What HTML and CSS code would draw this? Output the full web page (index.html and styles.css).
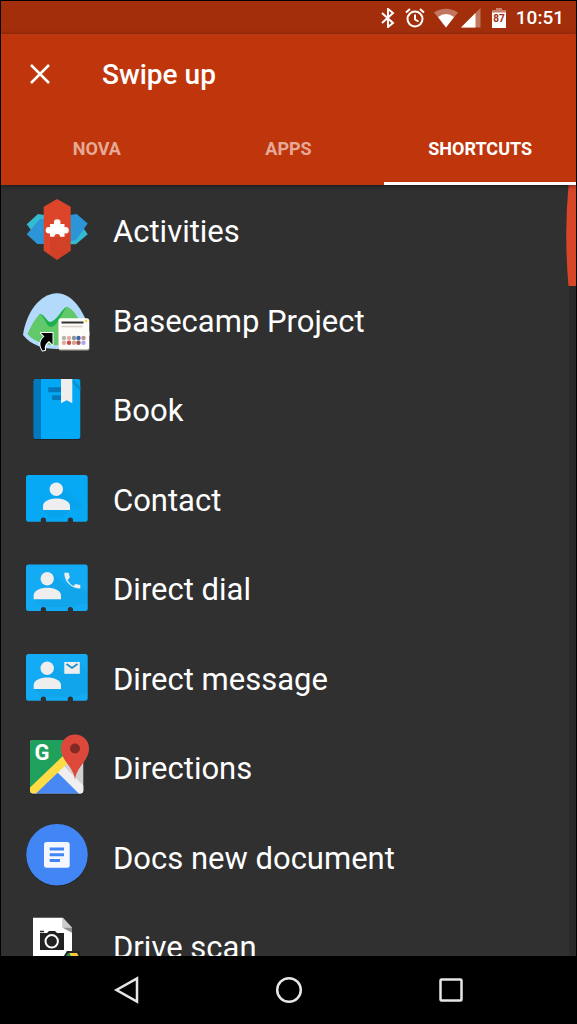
FILE: index.html
```html
<!DOCTYPE html>
<html lang="en">
<head>
  <meta charset="UTF-8">
  <meta name="viewport" content="width=device-width, initial-scale=1">
  <title>Swipe up</title>
  <link rel="stylesheet" href="styles.css">
</head>
<body>

  <div class="status-bar">
    <svg width="14" height="20" viewBox="0 0 14 20" fill="none" stroke="#fff" stroke-width="2"><path d="M1 5l11 10-5 4V1l5 4L1 15"/></svg>
    <svg class="alarm" width="20" height="20" viewBox="0 0 20 20" fill="none" stroke="#fff" stroke-width="2"><circle cx="10" cy="11" r="7.5"/><path d="M10 6.500v5l3.500 2M1 4.500l4-3.500M19 4.500L15 1"/></svg>
    <svg class="wifi" width="24" height="20" viewBox="0 0 24 20"><path d="M0 4.500Q12-3 24 4.500L12 19.500z" fill="#fff" opacity=".35"/><path d="M4 9Q12 3 20 9l-8 10.500z" fill="#fff"/></svg>
    <svg class="signal" width="20" height="20" viewBox="0 0 20 20"><path d="M0 19.500L19.500 0v19.500z" fill="#fff" opacity=".35"/><path d="M0 19.500L14.500 5v14.500z" fill="#fff"/></svg>
    <svg class="battery" width="14" height="20" viewBox="0 0 14 20"><path d="M4 0h6v2h4v3H0V2h4z" fill="#fff" opacity=".4"/><path d="M0 4.500h14V20H0z" fill="#fff"/><text x="7" y="14" text-anchor="middle" class="battery-text">87</text></svg>
    <span class="clock">10:51</span>
  </div>

  <header class="app-bar">
    <div class="title-row">
      <button class="close-btn" aria-label="Close">
        <svg width="20" height="20" viewBox="0 0 20 20" fill="none" stroke="#fff" stroke-width="2.500"><path d="M1 1l18 18M19 1L1 19"/></svg>
      </button>
      <h1>Swipe up</h1>
    </div>
    <nav class="tabs">
      <button class="tab">NOVA</button>
      <button class="tab">APPS</button>
      <button class="tab active">SHORTCUTS</button>
    </nav>
  </header>

  <main class="list-wrap">
    <div class="list">
      <button class="row">
        <svg class="icon" viewBox="0 0 70 70">
          <path d="M22 20l-6-1L4.700 29.300 9 35l13 8zM48 49.300h6l11.700-10L62 34l-14 4z" fill="#33bcd0"/>
          <path d="M22 24h-4L4.700 39.300 15.300 49H22zM48 20l6.700-1 11 9.500L54 45l-6 1z" fill="#2b95d8"/>
          <path d="M35 4l13.700 7.700v44L35 65l-13.300-9.300v-44z" fill="#dc452a"/>
          <path d="M43 42l5.700-5v18.700L35 65l-7-5V42z" fill="#b93721" opacity=".3"/>
          <path d="M28 29h14.500v12.700h-4.500a2.800 2.800 0 0 0-5.600 0H28z" fill="#fff"/>
          <circle cx="35.200" cy="27.500" r="3.300" fill="#fff"/><circle cx="27" cy="35.200" r="3.300" fill="#fff"/><circle cx="43.500" cy="35.200" r="3.300" fill="#fff"/>
        </svg>
        <span>Activities</span>
      </button>
      <button class="row">
        <svg class="icon" viewBox="0 0 70 70">
          <path d="M35 8.300C52 8.300 65 31 68 50 60 60 49 64 35 64S9 60 1 50C4 28 18 8.300 35 8.300z" fill="#b4dafb"/>
          <path d="M5.500 49C9 41 13 34 17.300 29.300 22 28 25 37 28 37c6 0 11-12 16.700-15.300C50 22 59 35 64 49 50 64 18 64 5.500 49z" fill="#61c96a"/>
          <path d="M17.300 29.300C22 28 25 37 28 37c6 0 11-12 16.700-15.300C39 29 36 41 29 42c-5 0-6-11-11.700-12.700z" fill="#1db04e"/>
          <path d="M19 48h11.500v11.500L27 56c-3.500 2.500-4.500 5-4 9l-2.500.500c-3.500-6-2.500-10.500 2-14z" fill="#000" stroke="#fff" stroke-width="2" stroke-linejoin="round" paint-order="stroke"/>
          <rect x="36.500" y="34" width="31" height="31.500" rx="2" fill="#aaa7a0"/>
          <rect x="36.500" y="33.300" width="30.500" height="31" rx="2" fill="#fdfcf9"/>
          <path d="M39.500 37.500h22" stroke="#333" stroke-width="2"/><path d="M39.500 41.500h21" stroke="#d8d2c6" stroke-width="1.500"/>
          <circle cx="64" cy="36" r="1.300" fill="#f5d53d"/>
          <g fill="#b9b5ae"><circle cx="42" cy="53" r="2.200"/><circle cx="47" cy="53" r="2.200" fill="#e5aaa5"/><circle cx="52" cy="53" r="2.200" fill="#8a9598"/><circle cx="56.500" cy="53" r="2.200" fill="#3a64a5"/><circle cx="61.500" cy="53" r="2.200" fill="#bb9199"/><circle cx="42" cy="57.700" r="2.200" fill="#dfaaa0"/><circle cx="47" cy="57.700" r="2.200" fill="#c64b43"/><circle cx="52" cy="57.700" r="2.200" fill="#e09b8b"/><circle cx="56.500" cy="57.700" r="2.200" fill="#965656"/><circle cx="61.500" cy="57.700" r="2.200" fill="#aaa9ed"/></g>
        </svg>
        <span>Basecamp Project</span>
      </button>
      <button class="row">
        <svg class="icon" viewBox="0 0 70 70">
          <rect x="11.700" y="6" width="46.600" height="60" rx="2.500" fill="#222"/>
          <rect x="11.700" y="5" width="46.600" height="60" rx="2.500" fill="#03a9f4"/>
          <path d="M14 5h5v60h-5q-2.300 0-2.300-2.500v-55Q11.700 5 14 5z" fill="#0478bd"/>
          <path d="M50.300 5l8 8v4L50.300 9z" fill="#0293d5"/>
          <path d="M26.300 13.300H39v5H26.300zM30 21.300h9V26h-9z" fill="#0478bd"/>
          <path d="M39 5h11.300v24.300l-5.600-3-5.700 3z" fill="#eee"/>
        </svg>
        <span>Book</span>
      </button>
      <button class="row">
        <svg class="icon" viewBox="0 0 70 70">
          <path d="M6.500 11h56.700q2.500 0 2.500 2.500v41.700q0 2.500-2.500 2.500H51V56a2.600 2.600 0 0 0-5.200 0v1.700H24V56a2.600 2.600 0 0 0-5.200 0v1.700H6.500Q4 57.700 4 55.200V13.500Q4 11 6.500 11z" fill="#08a9f4"/>
          <path d="M39 20l22 22-13 4-8 8H29l-8-8z" fill="#0684c4" opacity=".15"/>
          <circle cx="34.300" cy="25.300" r="6.700" fill="#eee"/><path d="M21 46v-4c0-5 7-7.500 13.500-7.500S48 37 48 42v4z" fill="#eee"/>
        </svg>
        <span>Contact</span>
      </button>
      <button class="row">
        <svg class="icon" viewBox="0 0 70 70">
          <path d="M6.500 11.500h56.700q2.500 0 2.500 2.500v41.500q0 2.500-2.500 2.500H51v-1.500a2.600 2.600 0 0 0-5.200 0V58H24v-1.500a2.600 2.600 0 0 0-5.200 0V58H6.500Q4 58 4 55.500V14q0-2.500 2.500-2.500z" fill="#13abf3"/>
          <path d="M30 21l16 13 12-1 7.700 7v10l-20 4H20l-8-8z" fill="#0684c4" opacity=".15"/>
          <circle cx="25.200" cy="25.700" r="6.700" fill="#eee"/><path d="M11.700 46.300v-4c0-5 7-7.500 13.500-7.500S39 37.300 39 42.300v4z" fill="#eee"/>
          <path d="M42.300 19.700h4.500l1 5-2.300 2.300q2 4 6 6l2-2 4.800 1v3.600C49 35.500 42 28 42.300 19.700z" fill="#eee"/>
        </svg>
        <span>Direct dial</span>
      </button>
      <button class="row">
        <svg class="icon" viewBox="0 0 70 70">
          <path d="M6.500 11h56.700q2.500 0 2.500 2.500v41.700q0 2.500-2.500 2.500H51V56a2.600 2.600 0 0 0-5.200 0v1.700H24V56a2.600 2.600 0 0 0-5.200 0v1.700H6.500Q4 57.700 4 55.200V13.500Q4 11 6.500 11z" fill="#13abf3"/>
          <path d="M30 21l12 10 16-11 7.700 8v22l-20 4H20l-8-8z" fill="#0684c4" opacity=".15"/>
          <circle cx="25.200" cy="25.300" r="6.700" fill="#eee"/><path d="M11.700 46v-4c0-5 7-7.500 13.500-7.500S39 37 39 42v4z" fill="#eee"/>
          <rect x="42.300" y="19" width="15.500" height="11.800" fill="#eee"/><path d="M44.500 21l5.500 4 5.500-4" fill="none" stroke="#168fc7" stroke-width="1.800"/>
        </svg>
        <span>Direct message</span>
      </button>
      <button class="row">
        <svg class="icon" viewBox="0 0 70 70">
          <rect x="8" y="9" width="53.300" height="53.500" rx="3" fill="#1d1d1d"/>
          <rect x="8" y="8" width="53.300" height="53.500" rx="3" fill="#d1d1d1"/>
          <path d="M11 8h44v10L8 60V11q0-3 3-3z" fill="#1fa15d"/>
          <path d="M35.300 37L60 61.500H11z" fill="#4788f4"/>
          <path d="M35.300 37l5-4.500 21 21V58.500q0 3-3 3h-1.500L33 38z" fill="#efefef"/>
          <path d="M8 55.500L43 22l6 6-35 33.500h-3q-3 0-3-3z" fill="#fedc45"/>
          <text x="20" y="28" text-anchor="middle" class="maps-letter">G</text>
          <path d="M53 48c-1-13-14-19-14-31.500a14 14 0 0 1 28 0C67 29 54 35 53 48z" fill="#de483b"/>
          <circle cx="53" cy="16.500" r="5" fill="#7f2a25"/>
        </svg>
        <span>Directions</span>
      </button>
      <button class="row">
        <svg class="icon" viewBox="0 0 70 70">
          <circle cx="35" cy="33.500" r="31" fill="#222"/><circle cx="35" cy="32.700" r="30.800" fill="#4285f4"/>
          <rect x="22" y="20" width="25.700" height="25.700" rx="2.500" fill="#f4f7fe"/>
          <path d="M27.700 27H42M27.700 32.700H42M27.700 38.400H38" stroke="#4285f4" stroke-width="3"/>
        </svg>
        <span>Docs new document</span>
      </button>
      <button class="row">
        <svg class="icon" viewBox="0 0 70 70">
          <path d="M11 6.700h29.700l9.300 10V62H11z" fill="#fff"/><path d="M40.700 6.700l9.300 10v5l-9.300-5z" fill="#8e8e8e"/><path d="M40.700 6.700l9.300 10h-9.300z" fill="#ccc"/>
          <path d="M18 22h7l2-2h6l2 2h7v17H18z" fill="#222"/><path d="M18 20.500h4" stroke="#222" stroke-width="1.500"/><circle cx="29.700" cy="30.300" r="6.200" fill="#222" stroke="#fff" stroke-width="2"/>
          <path d="M45 40h13v8H40z" fill="#222"/><path d="M47 42h8l4 8h-8z" fill="#fac83d"/><path d="M46 42l3 3-5 5h-3z" fill="#14a35f"/>
        </svg>
        <span>Drive scan</span>
      </button>
    </div>
    <div class="scroll-track">
      <svg width="10" height="101" viewBox="0 0 10 101"><path d="M2.500 0H10v101H2.500Q-2 50 2.500 0z" fill="#d84627"/></svg>
    </div>
  </main>

  <footer class="nav-bar">
    <button class="nav-btn" aria-label="Back"><svg width="28" height="28" viewBox="0 0 28 28"><path d="M24 2.500v23L3.500 14z"/></svg></button>
    <button class="nav-btn" aria-label="Home"><svg width="28" height="28" viewBox="0 0 28 28"><circle cx="14" cy="14" r="11.800"/></svg></button>
    <button class="nav-btn" aria-label="Recent apps"><svg width="28" height="28" viewBox="0 0 28 28"><rect x="3.500" y="3.500" width="21" height="21" rx="1"/></svg></button>
  </footer>

</body>
</html>
```
FILE: styles.css
```css
* {
  box-sizing: border-box;
}

body {
  margin: 0;
  height: 100vh;
  display: flex;
  flex-direction: column;
  border: 1px solid #000;
  border-bottom: none;
  background: #303030;
  color: #fff;
  font-family: Roboto, sans-serif;
}

button {
  margin: 0;
  padding: 0;
  border: none;
  background: none;
  color: inherit;
  font-family: inherit;
  cursor: pointer;
}

svg {
  display: block;
  flex: none;
}

/* Status bar */
.status-bar {
  flex: none;
  height: 33px;
  display: flex;
  align-items: center;
  justify-content: flex-end;
  padding-right: 12px;
  background: #a32e0b;
}

.alarm {
  margin-left: 10px;
}

.wifi {
  margin-left: 9px;
}

.signal {
  margin-left: 3px;
}

.battery {
  margin-left: 11px;
}

.battery-text {
  font-size: 10px;
  font-weight: 700;
  fill: #a32e0b;
}

.clock {
  margin-left: 10px;
  font-size: 19px;
  font-weight: 500;
}

/* App bar */
.app-bar {
  flex: none;
  background: #bf360c;
  position: relative;
  z-index: 1;
  box-shadow: 0 1px 4px rgba(0, 0, 0, 0.5);
}

.title-row {
  height: 80px;
  display: flex;
  align-items: center;
  padding-left: 29px;
}

h1 {
  margin: 0 0 0 52px;
  font-size: 28px;
  font-weight: 500;
}

.tabs {
  display: grid;
  grid-template-columns: repeat(3, 1fr);
  height: 71px;
}

.tab {
  padding-bottom: 2px;
  border-top: 3px solid transparent;
  border-bottom: 3px solid transparent;
  font-size: 18px;
  font-weight: 700;
  color: #e6a996;
}

.tab.active {
  color: #fff;
  border-bottom-color: #fff;
}

/* Shortcut list */
.list-wrap {
  flex: 1;
  min-height: 0;
  position: relative;
  overflow: hidden;
}

.row {
  display: flex;
  width: 100%;
  height: 90px;
  padding: 10px 21px;
  gap: 21px;
  font-size: 31px;
  line-height: 74px;
  text-align: left;
}

.row:nth-child(even) {
  height: 89px;
}

.icon {
  width: 70px;
  height: 70px;
}

.maps-letter {
  font-size: 22px;
  font-weight: 700;
  fill: #fff;
}

.scroll-track {
  position: absolute;
  top: 0;
  right: 0;
  bottom: 0;
  width: 7px;
  display: flex;
  justify-content: flex-end;
  align-items: flex-start;
  background: #292929;
}

/* Navigation bar */
.nav-bar {
  flex: none;
  height: 68px;
  display: flex;
  justify-content: center;
  align-items: center;
  gap: 134px;
  background: #000;
}

.nav-btn svg {
  fill: none;
  stroke: #e6e6e6;
  stroke-width: 2.5px;
}
```
